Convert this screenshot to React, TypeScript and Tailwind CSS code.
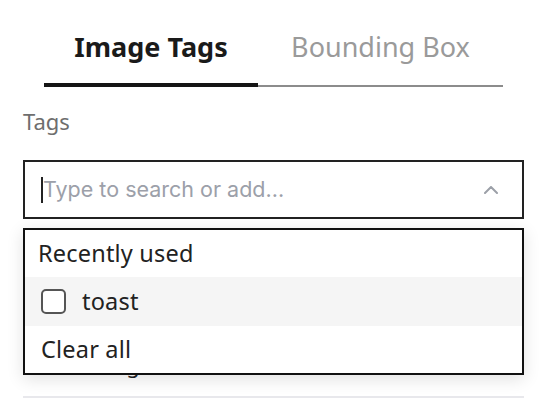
import { useState } from "react";

const tabs = ["Image Tags", "Bounding Box"];

function Chevron() {
  return (
    <svg width="14" height="8" viewBox="0 0 14 8" fill="none">
      <path d="M1 7l6-6 6 6" stroke="#9ca0a8" strokeWidth="2" strokeLinecap="round" strokeLinejoin="round" />
    </svg>
  );
}

export default function App() {
  const [active] = useState(0);

  return (
    <div className="w-[550px] h-[400px] bg-white overflow-hidden font-['Noto_Sans',sans-serif]">
      <div className="relative ml-[23px] w-[501px]">
        {/* tabs */}
        <div className="mx-[21px] flex items-end pt-[29px]">
          {tabs.map((t, i) => (
            <div key={t} className={`flex flex-col items-center ${i === 0 ? "w-[214px]" : "flex-1"}`}>
              <span
                className={`text-[27px] leading-[36px] ${
                  i === active ? "font-bold text-[#1a1a1a]" : "text-[#9a9a9a]"
                }`}
              >
                {t}
              </span>
              {i === active ? (
                <div className="mt-[18px] h-[4px] w-full bg-[#151515]" />
              ) : (
                <div className="mt-[20px] h-[2px] w-full bg-[#8c8c8c]" />
              )}
            </div>
          ))}
        </div>

        {/* tags field */}
        <div className="mt-[20px] text-[22px] leading-[28px] text-[#6e6e6e]">Tags</div>
        <div className="mt-[25px] flex h-[59px] items-center border-2 border-[#222] pl-[16px] pr-[24px]">
          <div className="h-[26px] w-[2px] bg-[#222]" />
          <span className="flex-1 font-['Inter',sans-serif] text-[21.5px] text-[#9ca0a9]">
            Type to search or add...
          </span>
          <Chevron />
        </div>

        {/* content beneath the menu */}
        <div className="mt-[131px] text-[22px] leading-[28px] text-[#222]">Edit settings</div>
        <div className="mt-[18px] h-[2px] w-full bg-[#e8e8ec]" />

        {/* dropdown menu */}
        <div className="absolute left-0 top-[228px] w-[501px] border-2 border-[#111] bg-white text-[23.5px] tracking-[0.2px] text-[#222] shadow-[0_4px_16px_rgba(0,0,0,0.12)]">
          <div className="flex h-[47px] items-center pl-[13px]">Recently used</div>
          <div className="flex h-[49px] items-center gap-[16px] bg-[#f5f5f5] pl-[16px]">
            <div className="h-[25px] w-[25px] rounded-[5px] border-2 border-[#555] bg-white" />
            <span>toast</span>
          </div>
          <div className="flex h-[47px] items-center pl-[16px]">Clear all</div>
        </div>
      </div>
    </div>
  );
}
